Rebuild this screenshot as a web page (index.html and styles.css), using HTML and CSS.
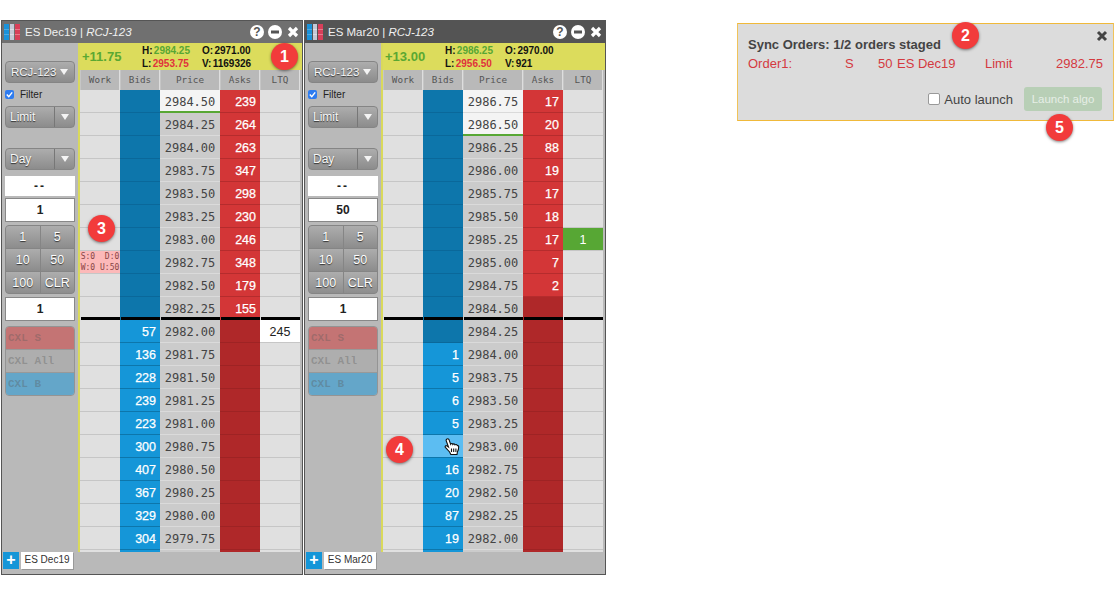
FILE: index.html
```html
<!DOCTYPE html>
<html>
<head>
  <meta charset="UTF-8">
  <meta name="viewport" content="width=device-width, initial-scale=1.0">
  <title>Synced order ladders</title>
  <link rel="stylesheet" href="styles.css">
</head>
<body>
<div class="desktop">

  <!-- first ladder -->
  <div class="window">
    <div class="titlebar">
      <span class="logo"><i></i><i></i><i></i></span>
      <span class="title">ES Dec19 | <em>RCJ-123</em></span>
      <span class="win-btn help">?</span>
      <svg class="win-icon" viewBox="0 0 14 14"><circle cx="7" cy="7" r="7" fill="#fff"/><rect x="3" y="5.5" width="8" height="3" fill="#555"/></svg>
      <svg class="win-icon close" viewBox="0 0 12 12"><path d="M2 2l8 8M10 2l-8 8" stroke="#fff" stroke-width="3.2"/></svg>
    </div>
    <div class="window-body">
      <div class="side">
        <div class="select wide">RCJ-123<span class="arrow"></span></div>
        <label class="filter"><span class="tick"><svg viewBox="0 0 10 10"><path d="M2 5l2.2 2.4L8 2.6" fill="none" stroke="#fff" stroke-width="1.6"/></svg></span>Filter</label>
        <div class="select split"><span class="select-text">Limit</span><span class="select-arrow"><span class="arrow"></span></span></div>
        <div class="select split day"><span class="select-text">Day</span><span class="select-arrow"><span class="arrow"></span></span></div>
        <div class="readout">--</div>
        <div class="qty">1</div>
        <div class="keypad"><span>1</span><span>5</span><span>10</span><span>50</span><span>100</span><span>CLR</span></div>
        <div class="qty second">1</div>
        <div class="cancels"><span class="cxl-s">CXL S</span><span class="cxl-a">CXL All</span><span class="cxl-b">CXL B</span></div>
      </div>
      <div class="main">
        <div class="info">
          <span class="change">+11.75</span>
          <div class="stats">
            <span>H: <b class="up">2984.25</b></span><span>O: 2971.00</span>
            <span>L: <b class="down">2953.75</b></span><span>V: 1169326</span>
          </div>
        </div>
        <div class="head"><span>Work</span><span>Bids</span><span>Price</span><span>Asks</span><span>LTQ</span></div>
        <div class="ladder">
          <div class="row"><span class="work"></span><span class="bid off"></span><span class="px last">2984.50</span><span class="ask">239</span><span class="ltq"></span></div>
          <div class="row"><span class="work"></span><span class="bid off"></span><span class="px">2984.25</span><span class="ask">264</span><span class="ltq"></span></div>
          <div class="row"><span class="work"></span><span class="bid off"></span><span class="px">2984.00</span><span class="ask">263</span><span class="ltq"></span></div>
          <div class="row"><span class="work"></span><span class="bid off"></span><span class="px">2983.75</span><span class="ask">347</span><span class="ltq"></span></div>
          <div class="row"><span class="work"></span><span class="bid off"></span><span class="px">2983.50</span><span class="ask">298</span><span class="ltq"></span></div>
          <div class="row"><span class="work"></span><span class="bid off"></span><span class="px">2983.25</span><span class="ask">230</span><span class="ltq"></span></div>
          <div class="row"><span class="work"></span><span class="bid off"></span><span class="px">2983.00</span><span class="ask">246</span><span class="ltq"></span></div>
          <div class="row"><span class="work staged">S:0&nbsp;&nbsp;D:0<br>W:0 U:50</span><span class="bid off"></span><span class="px">2982.75</span><span class="ask">348</span><span class="ltq"></span></div>
          <div class="row"><span class="work"></span><span class="bid off"></span><span class="px">2982.50</span><span class="ask">179</span><span class="ltq"></span></div>
          <div class="row split-row"><span class="work"></span><span class="bid off"></span><span class="px">2982.25</span><span class="ask">155</span><span class="ltq"></span></div>
          <div class="row"><span class="work"></span><span class="bid">57</span><span class="px">2982.00</span><span class="ask off"></span><span class="ltq traded">245</span></div>
          <div class="row"><span class="work"></span><span class="bid">136</span><span class="px">2981.75</span><span class="ask off"></span><span class="ltq"></span></div>
          <div class="row"><span class="work"></span><span class="bid">228</span><span class="px">2981.50</span><span class="ask off"></span><span class="ltq"></span></div>
          <div class="row"><span class="work"></span><span class="bid">239</span><span class="px">2981.25</span><span class="ask off"></span><span class="ltq"></span></div>
          <div class="row"><span class="work"></span><span class="bid">223</span><span class="px">2981.00</span><span class="ask off"></span><span class="ltq"></span></div>
          <div class="row"><span class="work"></span><span class="bid">300</span><span class="px">2980.75</span><span class="ask off"></span><span class="ltq"></span></div>
          <div class="row"><span class="work"></span><span class="bid">407</span><span class="px">2980.50</span><span class="ask off"></span><span class="ltq"></span></div>
          <div class="row"><span class="work"></span><span class="bid">367</span><span class="px">2980.25</span><span class="ask off"></span><span class="ltq"></span></div>
          <div class="row"><span class="work"></span><span class="bid">329</span><span class="px">2980.00</span><span class="ask off"></span><span class="ltq"></span></div>
          <div class="row"><span class="work"></span><span class="bid">304</span><span class="px">2979.75</span><span class="ask off"></span><span class="ltq"></span></div>
          <div class="row"><span class="work"></span><span class="bid"></span><span class="px"></span><span class="ask off"></span><span class="ltq"></span></div>
        </div>
      </div>
    </div>
    <div class="tabs"><span class="tab-add">+</span><span class="tab">ES Dec19</span></div>
  </div>

  <!-- second ladder -->
  <div class="window active">
    <div class="titlebar">
      <span class="logo"><i></i><i></i><i></i></span>
      <span class="title">ES Mar20 | <em>RCJ-123</em></span>
      <span class="win-btn help">?</span>
      <svg class="win-icon" viewBox="0 0 14 14"><circle cx="7" cy="7" r="7" fill="#fff"/><rect x="3" y="5.5" width="8" height="3" fill="#555"/></svg>
      <svg class="win-icon close" viewBox="0 0 12 12"><path d="M2 2l8 8M10 2l-8 8" stroke="#fff" stroke-width="3.2"/></svg>
    </div>
    <div class="window-body">
      <div class="side">
        <div class="select wide">RCJ-123<span class="arrow"></span></div>
        <label class="filter"><span class="tick"><svg viewBox="0 0 10 10"><path d="M2 5l2.2 2.4L8 2.6" fill="none" stroke="#fff" stroke-width="1.6"/></svg></span>Filter</label>
        <div class="select split"><span class="select-text">Limit</span><span class="select-arrow"><span class="arrow"></span></span></div>
        <div class="select split day"><span class="select-text">Day</span><span class="select-arrow"><span class="arrow"></span></span></div>
        <div class="readout">--</div>
        <div class="qty">50</div>
        <div class="keypad"><span>1</span><span>5</span><span>10</span><span>50</span><span>100</span><span>CLR</span></div>
        <div class="qty second">1</div>
        <div class="cancels"><span class="cxl-s">CXL S</span><span class="cxl-a">CXL All</span><span class="cxl-b">CXL B</span></div>
      </div>
      <div class="main">
        <div class="info">
          <span class="change">+13.00</span>
          <div class="stats">
            <span>H: <b class="up">2986.25</b></span><span>O: 2970.00</span>
            <span>L: <b class="down">2956.50</b></span><span>V: 921</span>
          </div>
        </div>
        <div class="head"><span>Work</span><span>Bids</span><span>Price</span><span>Asks</span><span>LTQ</span></div>
        <div class="ladder">
          <div class="row"><span class="work"></span><span class="bid off"></span><span class="px high">2986.75</span><span class="ask">17</span><span class="ltq"></span></div>
          <div class="row"><span class="work"></span><span class="bid off"></span><span class="px last">2986.50</span><span class="ask">20</span><span class="ltq"></span></div>
          <div class="row"><span class="work"></span><span class="bid off"></span><span class="px">2986.25</span><span class="ask">88</span><span class="ltq"></span></div>
          <div class="row"><span class="work"></span><span class="bid off"></span><span class="px">2986.00</span><span class="ask">19</span><span class="ltq"></span></div>
          <div class="row"><span class="work"></span><span class="bid off"></span><span class="px">2985.75</span><span class="ask">17</span><span class="ltq"></span></div>
          <div class="row"><span class="work"></span><span class="bid off"></span><span class="px">2985.50</span><span class="ask">18</span><span class="ltq"></span></div>
          <div class="row"><span class="work"></span><span class="bid off"></span><span class="px">2985.25</span><span class="ask">17</span><span class="ltq hit">1</span></div>
          <div class="row"><span class="work"></span><span class="bid off"></span><span class="px">2985.00</span><span class="ask">7</span><span class="ltq"></span></div>
          <div class="row"><span class="work"></span><span class="bid off"></span><span class="px">2984.75</span><span class="ask">2</span><span class="ltq"></span></div>
          <div class="row split-row"><span class="work"></span><span class="bid off"></span><span class="px">2984.50</span><span class="ask off"></span><span class="ltq"></span></div>
          <div class="row"><span class="work"></span><span class="bid off"></span><span class="px">2984.25</span><span class="ask off"></span><span class="ltq"></span></div>
          <div class="row"><span class="work"></span><span class="bid">1</span><span class="px">2984.00</span><span class="ask off"></span><span class="ltq"></span></div>
          <div class="row"><span class="work"></span><span class="bid">5</span><span class="px">2983.75</span><span class="ask off"></span><span class="ltq"></span></div>
          <div class="row"><span class="work"></span><span class="bid">6</span><span class="px">2983.50</span><span class="ask off"></span><span class="ltq"></span></div>
          <div class="row"><span class="work"></span><span class="bid">5</span><span class="px">2983.25</span><span class="ask off"></span><span class="ltq"></span></div>
          <div class="row"><span class="work"></span><span class="bid hover"><svg class="hand" viewBox="0 0 17 17"><path d="M3 1c1-.5 1.800 0 2.100 .9l1.500 4.300c.4-.9 1.900-.9 2.200.2 .5-.8 1.900-.7 2.200.4 .7-.6 2-.3 2.300.8 .7-.2 1.400.3 1.400 1.200 0 2-.4 3.800-1.300 5.200l-.4 2.500H6.800L5.600 14 1.400 9.400c-.8-1 .3-2.200 1.400-1.500l1.700 1.200L2.200 2.800C1.900 2 2.300 1.400 3 1z" fill="#fff" stroke="#111" stroke-width="1.100"/><path d="M7.500 10.500V14M9.700 10.500V14M11.900 10.500V14" stroke="#111" stroke-width="1.100"/></svg></span><span class="px">2983.00</span><span class="ask off"></span><span class="ltq"></span></div>
          <div class="row"><span class="work"></span><span class="bid">16</span><span class="px">2982.75</span><span class="ask off"></span><span class="ltq"></span></div>
          <div class="row"><span class="work"></span><span class="bid">20</span><span class="px">2982.50</span><span class="ask off"></span><span class="ltq"></span></div>
          <div class="row"><span class="work"></span><span class="bid">87</span><span class="px">2982.25</span><span class="ask off"></span><span class="ltq"></span></div>
          <div class="row"><span class="work"></span><span class="bid">19</span><span class="px">2982.00</span><span class="ask off"></span><span class="ltq"></span></div>
          <div class="row"><span class="work"></span><span class="bid"></span><span class="px"></span><span class="ask off"></span><span class="ltq"></span></div>
        </div>
      </div>
    </div>
    <div class="tabs"><span class="tab-add">+</span><span class="tab">ES Mar20</span></div>
  </div>

  <!-- sync popup -->
  <div class="popup">
    <svg class="popup-close" viewBox="0 0 12 12"><path d="M2 2l8 8M10 2l-8 8" stroke="#444" stroke-width="3"/></svg>
    <div class="popup-title">Sync Orders: 1/2 orders staged</div>
    <div class="order">
      <span>Order1:</span><span>S</span><span>50</span><span>ES Dec19</span><span>Limit</span><span>2982.75</span>
    </div>
    <div class="popup-foot">
      <label class="auto"><span class="box"></span>Auto launch</label>
      <span class="launch">Launch algo</span>
    </div>
  </div>
</div>

<span class="badge b1">1</span>
<span class="badge b2">2</span>
<span class="badge b3">3</span>
<span class="badge b4">4</span>
<span class="badge b5">5</span>
</body>
</html>
```

FILE: styles.css
```css
body {
  margin: 0;
  background-color: #fff;
  font-family: "Liberation Sans", Arial, sans-serif;
}
.desktop {
  display: flex;
  align-items: flex-start;
  padding: 20px 3px 0 1px;
}

/* ladder window */
.window {
  width: 302px;
  height: 555px;
  margin-right: 1px;
  box-sizing: border-box;
  border: 1px solid #555;
  background: #b9b9b9;
  display: flex;
  flex-direction: column;
}
.titlebar {
  height: 22px;
  flex: none;
  display: flex;
  align-items: center;
  padding-left: 2px;
  background: #707070;
  color: #f0f0f0;
  font-size: 11.5px;
}
.active .titlebar { background: #545454; }
.logo {
  width: 16px;
  height: 16px;
  margin-right: 5px;
  display: flex;
  gap: 1px;
}
.logo i { flex: 1; }
.logo i:nth-child(1) { background: linear-gradient(#1a92da 0 32%, #4fa8e0 32% 38%, #1a92da 38% 62%, #4fa8e0 62% 68%, #1a92da 68%); }
.logo i:nth-child(2) { background: linear-gradient(#c4c8d6 0 32%, #dcdee6 32% 38%, #c4c8d6 38% 62%, #dcdee6 62% 68%, #c4c8d6 68%); }
.logo i:nth-child(3) { background: linear-gradient(#d83f5a 0 32%, #e67a8c 32% 38%, #d83f5a 38% 62%, #e67a8c 62% 68%, #d83f5a 68%); }
.title { flex: 1; white-space: nowrap; }
.title em { font-style: italic; }
.win-btn {
  width: 14px;
  height: 14px;
  border-radius: 50%;
  background: #fff;
  color: #555;
  font-size: 12px;
  font-weight: bold;
  line-height: 14px;
  text-align: center;
}
.win-icon { width: 14px; height: 14px; margin-left: 4px; }
.win-icon.close { width: 12px; height: 12px; margin: 0 3px 0 5px; }

.window-body {
  flex: 1;
  min-height: 0;
  display: flex;
}

/* order entry column */
.side {
  width: 70px;
  flex: none;
  padding: 18px 3px 0;
  font-size: 12px;
}
.select {
  height: 22px;
  box-sizing: border-box;
  border: 1px solid #858585;
  border-radius: 4px;
  background: linear-gradient(#adadad, #8c8c8c);
  color: #f6f6f6;
  text-shadow: 0 1px 1px #333;
  display: flex;
  align-items: center;
  line-height: 20px;
}
.select.wide { padding: 0 6px 0 5px; justify-content: space-between; font-size: 11.5px; }
.select-text { flex: 1; padding-left: 4px; }
.select-arrow {
  width: 19px;
  height: 20px;
  border-left: 1px solid #777;
  display: flex;
  align-items: center;
  justify-content: center;
}
.arrow {
  width: 0;
  height: 0;
  border-left: 4px solid transparent;
  border-right: 4px solid transparent;
  border-top: 6px solid #f4f4f4;
}
.filter {
  height: 23px;
  display: flex;
  align-items: center;
  color: #222;
  font-size: 10px;
}
.tick {
  width: 9px;
  height: 9px;
  margin-right: 6px;
  border-radius: 2px;
  background: #2e7cf0;
  display: flex;
}
.select.day { margin-top: 20px; }
.readout {
  height: 20px;
  margin-top: 6px;
  background: #fff;
  color: #222;
  font-weight: bold;
  font-size: 12px;
  letter-spacing: 2px;
  line-height: 20px;
  text-align: center;
}
.qty {
  height: 24px;
  margin-top: 2px;
  box-sizing: border-box;
  border: 1px solid #888;
  background: #fff;
  color: #222;
  font-weight: bold;
  font-size: 12px;
  line-height: 22px;
  text-align: center;
}
.qty.second { margin-top: 3px; }
.keypad {
  height: 69px;
  margin-top: 3px;
  box-sizing: border-box;
  border: 1px solid #858585;
  border-radius: 4px;
  overflow: hidden;
  display: grid;
  grid-template-columns: 1fr 1fr;
  grid-template-rows: repeat(3, 1fr);
  gap: 1px;
  background: #858585;
}
.keypad span {
  background: linear-gradient(#adadad, #8c8c8c);
  color: #fff;
  font-size: 12.5px;
  text-shadow: 0 1px 1px #333;
  text-align: center;
  line-height: 22px;
}
.cancels {
  height: 70px;
  margin-top: 5px;
  box-sizing: border-box;
  border: 1px solid #949494;
  border-radius: 4px;
  overflow: hidden;
  display: grid;
  grid-template-rows: repeat(3, 1fr);
  font-family: "Liberation Mono", monospace;
  font-size: 11px;
  font-weight: bold;
  color: rgba(90, 90, 90, .36);
}
.cancels span { padding-left: 2px; line-height: 22px; white-space: nowrap; }
.cxl-s { background: #c47474; }
.cxl-a { background: #aeaeae; border-top: 1px solid #999; border-bottom: 1px solid #999; }
.cxl-b { background: #64a6c9; }

/* price ladder */
.main {
  width: 222px;
  flex: none;
  border-left: 2px solid #d9d95c;
  display: flex;
  flex-direction: column;
  min-height: 0;
  overflow: hidden;
}
.info {
  height: 27px;
  flex: none;
  background: #dcdc5c;
  display: flex;
  align-items: center;
}
.change {
  width: 60px;
  padding-left: 2px;
  color: #5aa832;
  font-size: 13px;
  font-weight: bold;
}
.stats {
  display: grid;
  grid-template-columns: 60px 70px;
  font-size: 10px;
  font-weight: bold;
  color: #111;
  line-height: 13px;
  word-spacing: -1.5px;
  white-space: nowrap;
}
.up { color: #57a734; }
.down { color: #e0323c; }
.head, .row {
  display: grid;
  grid-template-columns: 40px 40px 60px 40px 40px;
}
.head {
  height: 20px;
  flex: none;
  font-family: "DejaVu Sans Mono", monospace;
  font-size: 9.3px;
  color: #555;
  text-align: center;
  line-height: 20px;
}
.head span {
  box-sizing: border-box;
  border-right: 1px solid #dedede;
  border-left: 1px solid #c6c6c6;
  background: #b9b9b9;
}
.ladder { flex: 1; min-height: 0; overflow: hidden; }
.row { height: 23px; }
.row span {
  box-sizing: border-box;
  height: 23px;
  border-bottom: 1px solid #c6c6c6;
  line-height: 24px;
}
/* black spread line, starts 1px in so the column edge shows through */
.row.split-row span {
  border-bottom: 0;
  background-image: linear-gradient(#000, #000);
  background-size: calc(100% - 1px) 3px;
  background-position: right bottom;
  background-repeat: no-repeat;
}
.work { background-color: #e0e0e0; }
.row .staged {
  background-color: #fcb9b9;
  color: #844;
  font-family: "DejaVu Sans Mono", monospace;
  font-size: 8px;
  line-height: 11px;
  white-space: nowrap;
  text-align: center;
}
.bid, .ask {
  color: #fff;
  font-size: 12.5px;
  -webkit-text-stroke: .25px #fff;
  text-align: right;
  padding-right: 4px;
}
.row .bid { background-color: #1596d8; border-bottom-color: #0d76ab; }
.row .bid.off { background-color: #0d76ab; border-bottom-color: #0a689a; }
.row .bid.hover { background-color: #5cbdf2; position: relative; }
.hand { position: absolute; left: 21px; top: 3px; width: 17px; height: 17px; }
.row .ask { background-color: #d33637; border-bottom-color: #b52c2d; }
.row .ask.off { background-color: #af2829; border-bottom-color: #9e2324; }
.px {
  background-color: #cbcbcb;
  color: #444;
  font-family: "DejaVu Sans Mono", monospace;
  font-size: 12px;
  text-align: center;
}
.row .px { border-bottom-color: #dadada; }
.px.high { background-color: #f4f4f4; }
.row .px.last { background-color: #f4f4f4; border-bottom: 2px solid #57a734; }
.ltq { background-color: #e0e0e0; color: #222; font-size: 12.5px; text-align: center; }
.ltq.traded { background-color: #fff; }
.ltq.hit { background-color: #57a734; color: #fff; }

/* instrument tabs */
.tabs {
  height: 22px;
  flex: none;
  display: flex;
  align-items: flex-start;
  font-size: 10px;
  padding-left: 1px;
}
.tab-add {
  width: 16px;
  height: 17px;
  background: #1596d8;
  color: #fff;
  font-size: 16px;
  font-weight: bold;
  line-height: 15px;
  text-align: center;
}
.tab {
  width: 52px;
  height: 17px;
  margin-left: 2px;
  background: #fff;
  box-shadow: 1px 1px 0 #999;
  color: #333;
  line-height: 16px;
  text-align: center;
}

/* sync popup */
.popup {
  position: relative;
  width: 377px;
  height: 98px;
  margin: 3px 0 0 auto;
  box-sizing: border-box;
  border-top: 1px solid #f0b93a;
  border-bottom: 1px solid #f0b93a;
  border-left: 1px solid #f0c35a;
  border-right: 1px solid #f0c35a;
  background: #dcdcdc;
  padding: 13px 10px 0 10px;
  color: #444;
  font-size: 13px;
}
.popup-close { position: absolute; right: 5px; top: 6px; width: 12px; height: 12px; }
.popup-title { font-weight: bold; font-size: 13px; line-height: 15px; }
.order {
  margin-top: 4px;
  display: grid;
  grid-template-columns: 97px 33px 19px 88px 71px 47px;
  color: #d4393f;
  line-height: 16px;
  white-space: nowrap;
}
.popup-foot {
  margin-top: 15px;
  display: flex;
  justify-content: flex-end;
  align-items: center;
  padding-right: 1px;
}
.auto { display: flex; align-items: center; margin-right: 11px; }
.box {
  width: 10px;
  height: 10px;
  margin-right: 4px;
  border: 1px solid #999;
  border-radius: 2px;
  background: #fff;
}
.launch {
  width: 78px;
  height: 24px;
  border-radius: 3px;
  background: #b8cfb6;
  color: #e6eee6;
  font-size: 11.5px;
  line-height: 24px;
  text-align: center;
}

/* numbered callouts */
.badge {
  position: absolute;
  width: 27px;
  height: 27px;
  border-radius: 50%;
  background: #f23b3b;
  box-shadow: 0 1px 3px rgba(0, 0, 0, .5);
  color: #fff;
  font-size: 16px;
  font-weight: bold;
  line-height: 27px;
  text-align: center;
}
.b1 { left: 271px; top: 43px; }
.b2 { left: 952px; top: 22px; }
.b3 { left: 88px; top: 215px; }
.b4 { left: 386px; top: 436px; }
.b5 { left: 1046px; top: 114px; }
```
